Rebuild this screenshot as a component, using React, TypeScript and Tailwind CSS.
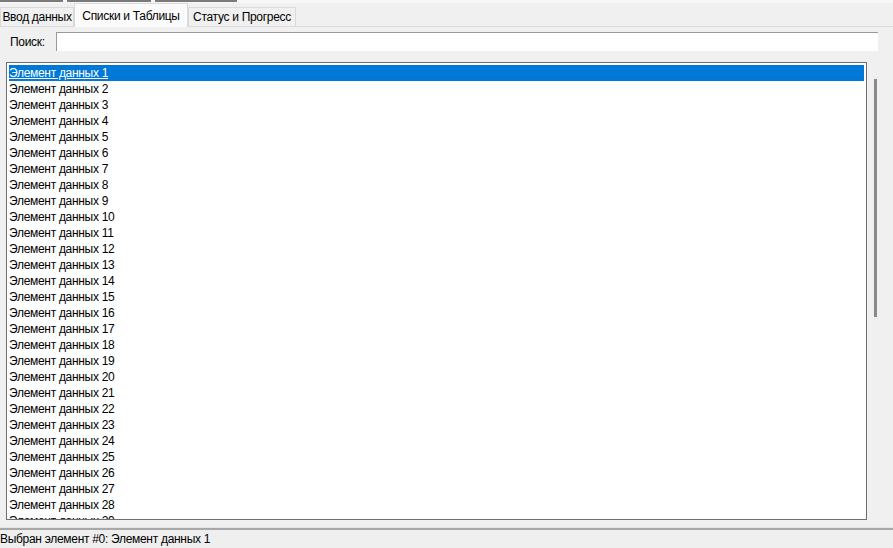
const ITEMS = Array.from({ length: 29 }, (_, i) => `Элемент данных ${i + 1}`);

const TABS = [
  { label: "Ввод данных", w: "w-[74px]" },
  { label: "Списки и Таблицы", w: "w-[114px]" },
  { label: "Статус и Прогресс", w: "w-[108px]" },
];

export default function App() {
  const active = 1;
  return (
    <div
      className="w-[893px] h-[548px] flex flex-col bg-[#f0f0f0] text-[12px] tracking-[-0.3px] text-black overflow-hidden"
      style={{ fontFamily: '"Segoe UI", "Liberation Sans", Arial, sans-serif' }}
    >
      {/* cut-off strip of the window above */}
      <div className="h-[3px] flex gap-[4px] bg-[#f7f7f7]">
        <div className="w-[63px] h-[2px] bg-[#7a7a7a]" />
        <div className="w-[84px] h-[2px] bg-[#7a7a7a]" />
        <div className="w-[82px] h-[2px] bg-[#7a7a7a]" />
      </div>

      {/* tabs */}
      <div className="h-[24px] flex items-end border-b border-[#dadada] bg-[#f0f0f0]">
        {TABS.map((t, i) =>
          i === active ? (
            <div
              key={t.label}
              className={`${t.w} h-[24px] flex items-center justify-center bg-[#fbfbfb] border border-b-0 border-[#dadada] -mb-px`}
            >
              {t.label}
            </div>
          ) : (
            <div
              key={t.label}
              className={`${t.w} h-[19px] flex items-center justify-center bg-[#f0f0f0] border border-b-0 border-[#dadada]`}
            >
              {t.label}
            </div>
          )
        )}
      </div>

      {/* page */}
      <div className="flex-1 flex flex-col px-[6px] pt-[5px] min-h-0">
        <div className="flex items-center h-[19px]">
          <span className="w-[50px] pl-[4px]">Поиск:</span>
          <div className="flex-1 h-[19px] mr-[9px] bg-white border-t border-l border-[#9a9a9a]" />
        </div>

        <div className="flex flex-1 mt-[11px] min-h-0">
          <div className="w-[861px] h-[458px] border border-[#6e6e6e] bg-white px-[2px] pt-[2px] overflow-hidden">
            {ITEMS.map((t, i) => (
              <div
                key={t}
                className={
                  i === 0
                    ? "h-[16px] leading-[16px] bg-[#0078d7] text-white underline"
                    : "h-[16px] leading-[16px]"
                }
              >
                {t}
              </div>
            ))}
          </div>
          <div className="ml-[7px] mt-[17px] w-[3px] h-[238px] bg-[#8a8a8a]" />
        </div>
      </div>

      {/* status bar */}
      <div className="mt-[6px] border-t border-[#e4e4e4]" />
      <div className="h-[20px] flex items-center border-t-2 border-[#a8a8a8] bg-[#efefef]">
        <span>Выбран элемент #0: Элемент данных 1</span>
      </div>
    </div>
  );
}
